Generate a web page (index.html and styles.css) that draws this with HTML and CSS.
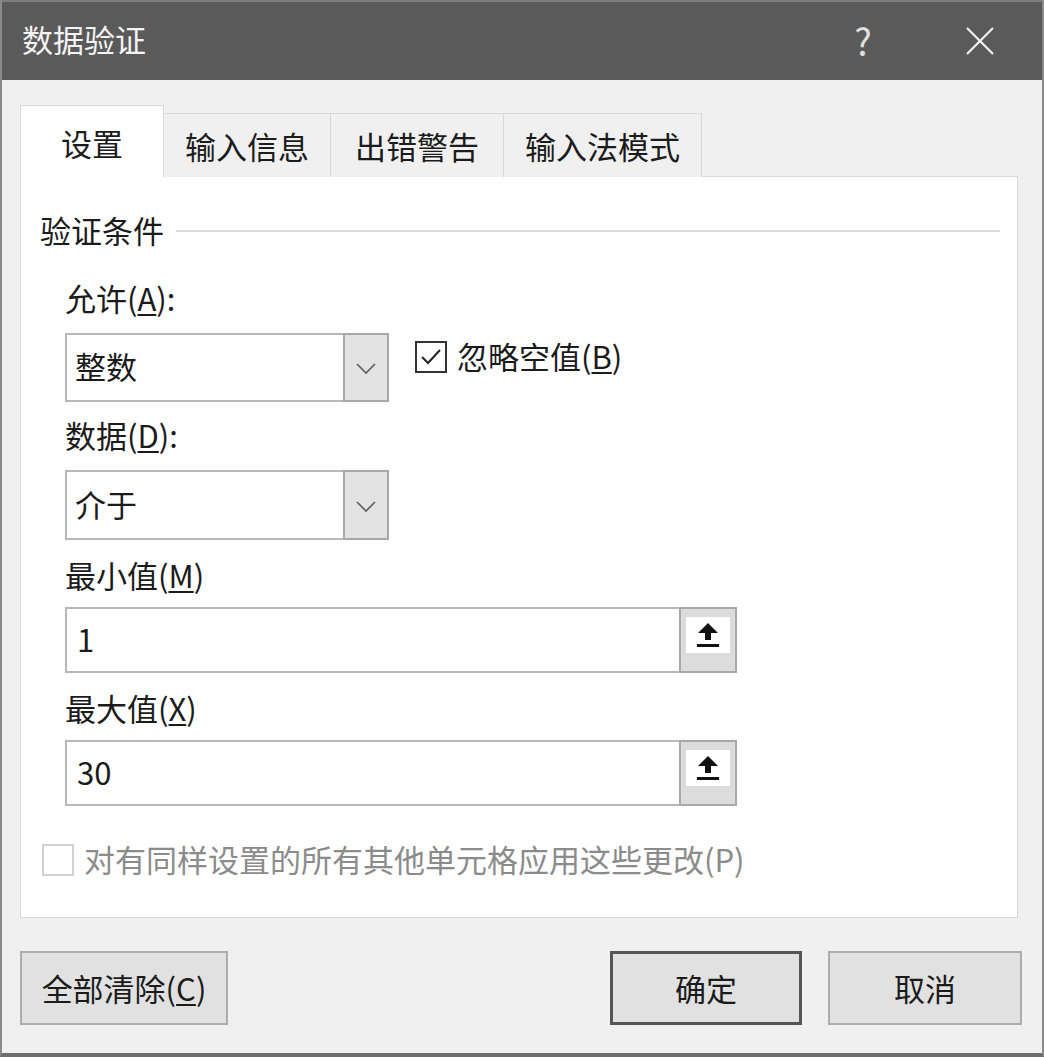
FILE: index.html
```html
<!DOCTYPE html>
<html lang="zh-CN">
<head>
<meta charset="utf-8">
<title>数据验证</title>
<link rel="stylesheet" href="styles.css">
</head>
<body>
<div class="window">
  <div class="titlebar">
    <span class="title">数据验证</span>
    <span class="help">?</span>
    <span class="close">
      <svg width="28" height="28" viewBox="0 0 28 28"><path d="M1 1 L27 27 M27 1 L1 27" stroke="#f2f2f2" stroke-width="2.2" fill="none"/></svg>
    </span>
  </div>

  <div class="content">
    <div class="tabs">
      <div class="tab tab-active">设置</div>
      <div class="tab">输入信息</div>
      <div class="tab tab-wide">出错警告</div>
      <div class="tab">输入法模式</div>
    </div>

    <div class="panel">
      <div class="group-head">
        <span class="group-title">验证条件</span>
        <span class="group-line"></span>
      </div>

      <div class="group">
        <div class="label label-first">允许(<u>A</u>):</div>
        <div class="row">
          <div class="select">
            <span class="select-value">整数</span>
            <span class="select-btn">
              <svg width="22" height="13" viewBox="0 0 22 13"><polyline points="2,2 11,11 20,2" stroke="#606060" stroke-width="1.7" fill="none"/></svg>
            </span>
          </div>
          <div class="check">
            <span class="box box-checked">
              <svg width="24" height="20" viewBox="0 0 24 20"><polyline points="3,10 9,16 21,3" stroke="#222" stroke-width="2" fill="none"/></svg>
            </span>
            <span class="check-text">忽略空值(<u>B</u>)</span>
          </div>
        </div>

        <div class="label label-gap">数据(<u>D</u>):</div>
        <div class="select select-tall">
          <span class="select-value">介于</span>
          <span class="select-btn">
            <svg width="22" height="13" viewBox="0 0 22 13"><polyline points="2,2 11,11 20,2" stroke="#606060" stroke-width="1.7" fill="none"/></svg>
          </span>
        </div>

        <div class="label label-gap2">最小值(<u>M</u>)</div>
        <div class="input">
          <span class="input-value">1</span>
          <span class="input-btn">
            <span class="input-btn-face">
              <svg width="24" height="27" viewBox="0 0 24 27"><path d="M12 1 L22 11 L15 11 L15 18 L9 18 L9 11 L2 11 Z" fill="#111"/><rect x="1" y="22" width="22" height="3" fill="#111"/></svg>
            </span>
          </span>
        </div>

        <div class="label label-gap2">最大值(<u>X</u>)</div>
        <div class="input">
          <span class="input-value">30</span>
          <span class="input-btn">
            <span class="input-btn-face">
              <svg width="24" height="27" viewBox="0 0 24 27"><path d="M12 1 L22 11 L15 11 L15 18 L9 18 L9 11 L2 11 Z" fill="#111"/><rect x="1" y="22" width="22" height="3" fill="#111"/></svg>
            </span>
          </span>
        </div>
      </div>

      <div class="check check-disabled">
        <span class="box box-disabled"></span>
        <span class="check-text">对有同样设置的所有其他单元格应用这些更改(P)</span>
      </div>
    </div>

    <div class="buttons">
      <div class="btn btn-clear">全部清除(<u>C</u>)</div>
      <div class="spacer"></div>
      <div class="btn btn-ok">确定</div>
      <div class="btn btn-cancel">取消</div>
    </div>
  </div>
</div>
</body>
</html>
```

FILE: styles.css
```css
* {
  box-sizing: border-box;
}

html, body {
  margin: 0;
  padding: 0;
  width: 1044px;
  height: 1057px;
  overflow: hidden;
  background: #f0f0f0;
}

body {
  font-family: "Noto Sans CJK SC", "Noto Sans", sans-serif;
  font-size: 31px;
  color: #1b1b1b;
}

u {
  text-decoration-thickness: 2px;
  text-underline-offset: 3px;
}

.window {
  width: 1044px;
  height: 1057px;
  background: #f0f0f0;
  border-left: 2px solid #8a8a8a;
  border-right: 2px solid #8a8a8a;
  border-bottom: 4px solid #6e6e6e;
  display: flex;
  flex-direction: column;
}

.titlebar {
  height: 80px;
  flex: none;
  background: #5a5a5a;
  border-top: 2px solid #7c7c7c;
  display: flex;
  align-items: center;
  padding-left: 20px;
  padding-right: 32px;
  color: #f4f4f4;
}

.title {
  font-size: 31px;
  line-height: 40px;
  padding-bottom: 4px;
}

.help {
  margin-left: auto;
  width: 60px;
  text-align: center;
  font-size: 37px;
  line-height: 40px;
  color: #e0e0e0;
  padding-bottom: 2px;
}

.close {
  margin-left: 57px;
  width: 60px;
  height: 40px;
  display: flex;
  align-items: center;
  justify-content: center;
}

.content {
  padding-left: 18px;
  padding-top: 25px;
}

.tabs {
  display: flex;
  align-items: flex-end;
  height: 72px;
  margin-bottom: -1px;
  position: relative;
  z-index: 1;
}

.tab {
  height: 64px;
  padding: 0 21px;
  display: flex;
  align-items: center;
  justify-content: center;
  line-height: 40px;
  background: #f0f0f0;
  border: 1px solid #d9d9d9;
  border-left: none;
  border-bottom: none;
}

.tab-wide {
  padding: 0 24px;
}

.tab-active {
  height: 72px;
  padding: 2px 40px 0;
  background: #ffffff;
  border-left: 1px solid #d9d9d9;
}

.panel {
  width: 998px;
  height: 742px;
  background: #ffffff;
  border: 1px solid #d9d9d9;
  padding: 35px 17px 0 19px;
}

.group-head {
  display: flex;
  align-items: center;
  height: 40px;
}

.group-title {
  line-height: 36px;
  padding-bottom: 4px;
}

.group-line {
  flex: 1;
  height: 2px;
  background: #dcdcdc;
  margin-left: 12px;
  margin-top: -2px;
}

.group {
  padding-left: 25px;
}

.label {
  line-height: 35px;
  height: 40px;
}

.label-first {
  margin-top: 28px;
}

.label-gap {
  margin-top: 15px;
}

.label-gap2 {
  margin-top: 17px;
}

.row {
  display: flex;
  align-items: flex-start;
  margin-top: 13px;
}

.select {
  width: 324px;
  height: 69px;
  border: 2px solid #b8b8b8;
  background: #ffffff;
  display: flex;
  align-items: stretch;
}

.select-tall {
  height: 70px;
  margin-top: 13px;
}

.select-value {
  flex: 1;
  display: flex;
  align-items: center;
  padding-left: 8px;
  padding-bottom: 4px;
}

.select-btn {
  width: 46px;
  margin: -2px -2px -2px 0;
  background: #e3e3e3;
  border: 2px solid #a8a8a8;
  display: flex;
  align-items: center;
  justify-content: center;
  padding-top: 2px;
}

.check {
  display: flex;
  align-items: center;
  height: 40px;
}

.row .check {
  margin-left: 26px;
  margin-top: 5px;
}

.box {
  width: 32px;
  height: 32px;
  flex: none;
  display: flex;
  align-items: center;
  justify-content: center;
  margin-top: -2px;
}

.box-checked {
  border: 2px solid #333333;
  background: #ffffff;
}

.box-disabled {
  border: 2px solid #d0d0d0;
  background: #ffffff;
}

.check-text {
  margin-left: 10px;
  line-height: 36px;
  padding-bottom: 4px;
}

.input {
  width: 672px;
  height: 66px;
  margin-top: 10px;
  border: 2px solid #b8b8b8;
  background: #ffffff;
  display: flex;
  align-items: stretch;
}

.input-value {
  flex: 1;
  display: flex;
  align-items: center;
  padding-left: 10px;
  padding-bottom: 3px;
}

.input-btn {
  width: 58px;
  margin: -2px -2px -2px 0;
  background: #dcdcdc;
  border: 2px solid #a9a9a9;
  padding: 8px 5px 18px;
  display: flex;
}

.input-btn-face {
  flex: 1;
  background: #ffffff;
  display: flex;
  align-items: center;
  justify-content: center;
}

.check-disabled {
  margin-top: 35px;
  margin-left: 2px;
  color: #8b8b8b;
}

.buttons {
  display: flex;
  margin-top: 33px;
  padding-right: 20px;
  height: 74px;
}

.btn {
  height: 74px;
  display: flex;
  align-items: center;
  justify-content: center;
  background: #e1e1e1;
  border: 2px solid #adadad;
  line-height: 40px;
}

.btn-clear {
  width: 208px;
}

.spacer {
  flex: 1;
}

.btn-ok {
  width: 192px;
  border: 3px solid #555555;
}

.btn-cancel {
  width: 194px;
  margin-left: 26px;
}
```
